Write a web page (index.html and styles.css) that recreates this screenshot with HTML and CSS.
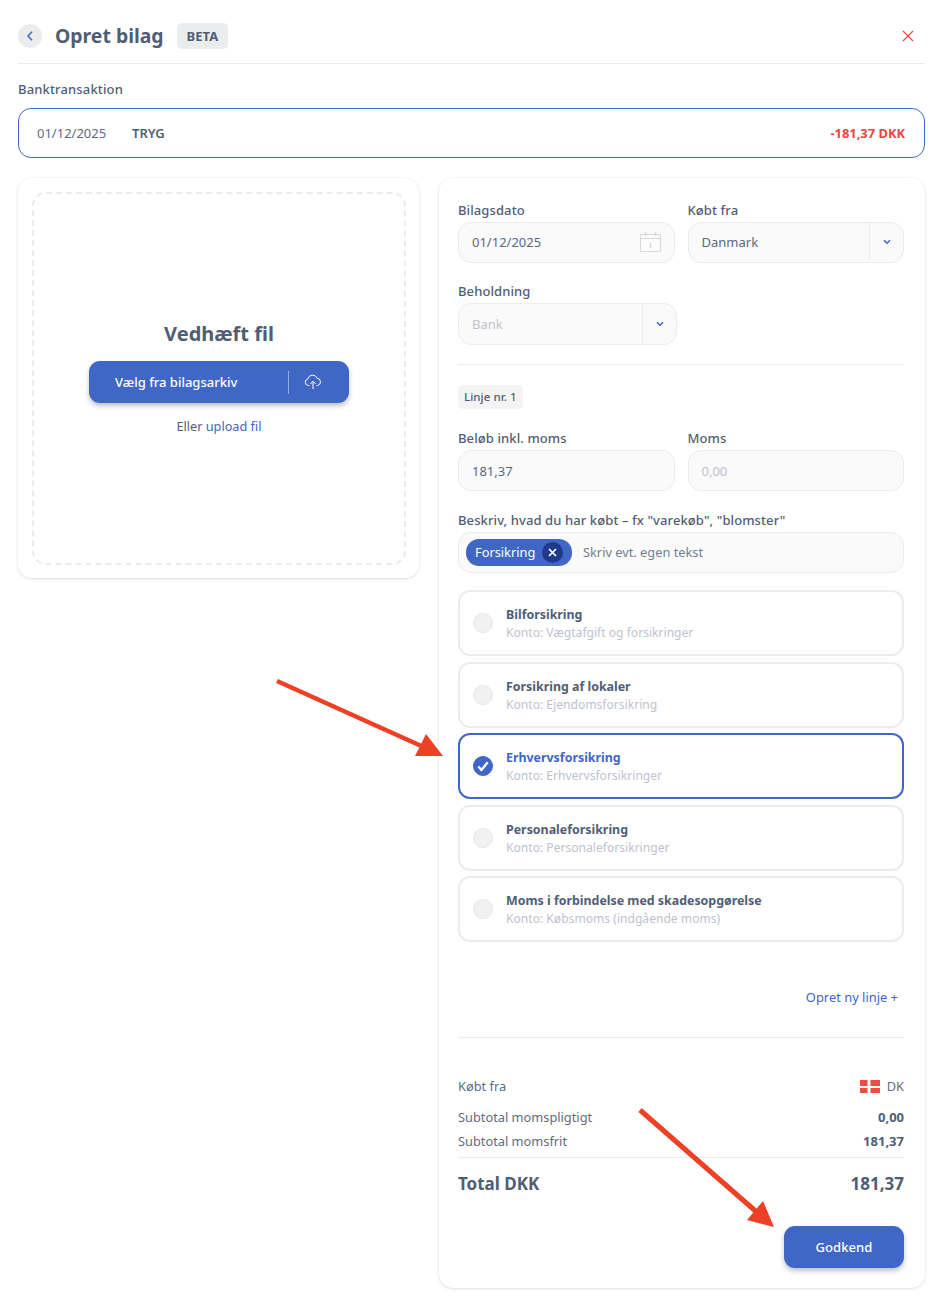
FILE: index.html
```html
<!DOCTYPE html>
<html lang="da">
<head>
<meta charset="utf-8">
<title>Opret bilag</title>
<link rel="stylesheet" href="styles.css">
</head>
<body>
<header class="top">
  <span class="back"><svg width="8" height="10" viewBox="0 0 8 10"><path d="M6 .8 2 5l4 4.2" fill="none" stroke="#3f67c6" stroke-width="1.5"/></svg></span>
  <h1>Opret bilag</h1>
  <span class="beta">BETA</span>
  <svg class="close" width="12" height="12" viewBox="0 0 12 12"><path d="M1 1l10 10M11 1 1 11" stroke="#ee4b45" stroke-width="1.3" fill="none"/></svg>
</header>
<div class="bank-label">Banktransaktion</div>
<div class="bank">
  <span class="bank-date">01/12/2025</span>
  <span class="bank-name">TRYG</span>
  <span class="bank-amount">-181,37 DKK</span>
</div>
<main class="cols">
  <section class="card left">
    <div class="drop">
      <h2>Vedhæft fil</h2>
      <div class="pick">
        <span class="pick-text">Vælg fra bilagsarkiv</span>
        <span class="pick-icon"><svg width="18" height="16" viewBox="0 0 18 16"><path d="M5.5 11.5H4.3A3.3 3.3 0 0 1 3.8 5a4.8 4.8 0 0 1 9.2-.8 3.7 3.7 0 0 1 .6 7.3h-1.1M9 15V7.5M6.3 10 9 7.3 11.7 10" fill="none" stroke="#fff" stroke-width="1"/></svg></span>
      </div>
      <p class="or">Eller <a class="link">upload fil</a></p>
    </div>
  </section>
  <section class="card right">
    <div class="row r1">
      <div class="field"><label>Bilagsdato</label>
        <div class="input">01/12/2025<svg class="cal" width="21" height="20" viewBox="0 0 21 20"><path d="M.5 2.500h20v17H.5zM.5 6.500h20" fill="#fcfcfc" stroke="#d6d8db" stroke-width="1"/><path d="M5.500 0v4M15.500 0v4M10.500 11v5" fill="none" stroke="#d6d8db" stroke-width="1.4"/></svg></div>
      </div>
      <div class="field"><label>Købt fra</label>
        <div class="input sel">Danmark<span class="caret"><svg width="8" height="6" viewBox="0 0 8 6"><path d="M1 1.2 4 4.2l3-3" fill="none" stroke="#3f67c6" stroke-width="1.6"/></svg></span></div>
      </div>
    </div>
    <div class="field hold"><label>Beholdning</label>
      <div class="input sel tall muted">Bank<span class="caret"><svg width="8" height="6" viewBox="0 0 8 6"><path d="M1 1.2 4 4.2l3-3" fill="none" stroke="#3f67c6" stroke-width="1.6"/></svg></span></div>
    </div>
    <hr class="rule r-a">
    <span class="line-no">Linje nr. 1</span>
    <div class="row r2">
      <div class="field"><label>Beløb inkl. moms</label><div class="input">181,37</div></div>
      <div class="field"><label>Moms</label><div class="input muted">0,00</div></div>
    </div>
    <div class="field desc"><label>Beskriv, hvad du har købt – fx "varekøb", "blomster"</label>
      <div class="input tagbox">
        <span class="tag">Forsikring<span class="tag-x"><svg width="9" height="9" viewBox="0 0 9 9"><path d="M1 1l7 7M8 1 1 8" stroke="#fff" stroke-width="1.7"/></svg></span></span>
        <span class="ph">Skriv evt. egen tekst</span>
      </div>
    </div>
    <div class="options">
      <div class="opt"><span class="radio"></span><div class="opt-body"><div class="opt-t">Bilforsikring</div><div class="opt-s">Konto: Vægtafgift og forsikringer</div></div></div>
      <div class="opt"><span class="radio"></span><div class="opt-body"><div class="opt-t">Forsikring af lokaler</div><div class="opt-s">Konto: Ejendomsforsikring</div></div></div>
      <div class="opt on"><span class="radio"><svg width="12" height="11" viewBox="0 0 12 11"><path d="M1.3 5.500 4.500 9 10.700 1.300" fill="none" stroke="#fff" stroke-width="2.4"/></svg></span><div class="opt-body"><div class="opt-t">Erhvervsforsikring</div><div class="opt-s">Konto: Erhvervsforsikringer</div></div></div>
      <div class="opt"><span class="radio"></span><div class="opt-body"><div class="opt-t">Personaleforsikring</div><div class="opt-s">Konto: Personaleforsikringer</div></div></div>
      <div class="opt"><span class="radio"></span><div class="opt-body"><div class="opt-t">Moms i forbindelse med skadesopgørelse</div><div class="opt-s">Konto: Købsmoms (indgående moms)</div></div></div>
    </div>
    <div class="newline"><a class="link">Opret ny linje +</a></div>
    <hr class="rule r-b">
    <div class="sum s-from"><span>Købt fra</span><span class="dk"><svg width="20" height="13" viewBox="0 0 20 13"><path d="M0 0h7.500v6H0zM10.500 0H20v6h-9.500zM0 8h7.500v5H0zM10.500 8H20v5h-9.500z" fill="#ee4b45"/></svg>DK</span></div>
    <div class="sum s-a"><span>Subtotal momspligtigt</span><b>0,00</b></div>
    <div class="sum s-b"><span>Subtotal momsfrit</span><b>181,37</b></div>
    <hr class="rule r-c">
    <div class="total"><span>Total DKK</span><span>181,37</span></div>
    <div class="actions"><span class="approve">Godkend</span></div>
  </section>
</main>
<svg class="arrow" width="944" height="1304" viewBox="0 0 944 1304">
  <path d="M277 681 428 749" stroke="#ec4125" stroke-width="4.5" fill="none"/>
  <path d="M443 756 415 756 426 734z" fill="#ec4125"/>
  <path d="M640 1110 760 1215" stroke="#ec4125" stroke-width="5" fill="none"/>
  <path d="M774 1227 747 1220 763 1201z" fill="#ec4125"/>
</svg>
</body>
</html>
```
FILE: styles.css
```css
* { box-sizing: border-box; }
html, body { margin: 0; padding: 0; }
body {
  position: relative;
  width: 944px;
  height: 1304px;
  overflow: hidden;
  padding: 0 19px 0 18px;
  background: #fff;
  color: #505e75;
  font-family: "Noto Sans", "Open Sans", sans-serif;
  font-size: 13px;
  line-height: 18px;
}
.top {
  display: flex;
  align-items: center;
  height: 64px;
  padding-top: 8px;
  border-bottom: 1px solid #e9eaec;
}
.back {
  display: flex;
  align-items: center;
  justify-content: center;
  width: 24px;
  height: 24px;
  border-radius: 50%;
  background: #ebecee;
}
h1 {
  margin: 0 13px 0 13px;
  font-size: 19.4px;
  line-height: 26px;
  font-weight: 700;
}
.beta {
  padding: 4px 10px;
  border-radius: 5px;
  background: #ebecee;
  font-size: 13px;
  font-weight: 700;
}
.close { margin-left: auto; margin-right: 11px; }
.bank-label { margin-top: 16px; font-weight: 500; letter-spacing: .15px; }
.bank {
  display: flex;
  align-items: center;
  height: 50px;
  margin-top: 10px;
  padding: 0 19px 0 18px;
  border: 1px solid #3f67c6;
  border-radius: 13px;
}
.bank-date { width: 95px; color: #5f6b7d; }
.bank-name { font-weight: 600; }
.bank-amount { margin-left: auto; color: #ee4540; font-size: 12.9px; font-weight: 700; }
.cols {
  display: flex;
  align-items: flex-start;
  gap: 20px;
  margin-top: 20px;
}
.card {
  border-radius: 14px;
  background: #fff;
  box-shadow: 0 1px 3px rgba(40, 50, 70, .14), 0 0 2px rgba(40, 50, 70, .05);
}
.left { width: 401px; height: 400px; padding: 14px 13px 13px 14px; }
.drop {
  display: flex;
  flex-direction: column;
  align-items: center;
  height: 100%;
  padding-top: 127px;
  border: 2px dashed #ebecee;
  border-radius: 14px;
}
h2 { margin: 0; font-size: 20px; line-height: 26px; font-weight: 700; }
.pick {
  display: flex;
  align-items: center;
  width: 260px;
  height: 42px;
  margin-top: 14px;
  padding-left: 26px;
  border-radius: 11px;
  background: #4067c6;
  box-shadow: 0 3px 5px rgba(40, 50, 70, .3);
  color: #fff;
  font-weight: 500;
}
.pick-text { width: 173px; }
.pick-icon {
  display: flex;
  align-items: center;
  height: 23px;
  padding-left: 15px;
  border-left: 1px solid rgba(255, 255, 255, .45);
}
.or { margin: 14px 0 0; font-size: 12.7px; }
.link { color: #4067c6; }
.right { width: 486px; height: 1110px; padding: 24px 21px 0 19px; }
.row { display: flex; gap: 13px; }
.field { display: flex; flex-direction: column; }
.row .field { flex: 1 1 0; }
label { font-weight: 500; line-height: 16px; letter-spacing: .1px; }
.input {
  position: relative;
  display: flex;
  align-items: center;
  height: 41px;
  margin-top: 4px;
  padding-left: 13px;
  border: 1px solid #ececee;
  border-radius: 13px;
  background: #fafafa;
  color: #5c687a;
}
.r1 .input { padding-bottom: 1px; }
.tall { height: 42px; }
.muted { color: #bdc3cd; }
.cal { margin-left: auto; margin-right: 13px; }
.caret {
  display: flex;
  align-items: center;
  justify-content: center;
  align-self: stretch;
  width: 34px;
  margin-left: auto;
  border-left: 1px solid #ececee;
}
.hold { width: 219px; margin-top: 20px; }
.rule { display: block; height: 1px; margin: 0; border: 0; background: #ebecee; }
.r-a { margin-top: 19px; }
.line-no {
  display: inline-block;
  margin-top: 20px;
  height: 24px;
  padding: 0 6px;
  border-radius: 5px;
  background: #f4f4f5;
  font-size: 11.5px;
  font-weight: 500;
  line-height: 24px;
  letter-spacing: .05px;
}
.r2 { margin-top: 21px; }
.desc { margin-top: 21px; }
.tagbox { padding-left: 7px; }
.tag {
  display: flex;
  align-items: center;
  justify-content: space-between;
  width: 106px;
  height: 27px;
  padding: 0 9px 1px 9px;
  border-radius: 13px;
  background: #4067c6;
  color: #fff;
  font-size: 12.8px;
}
.tag-x {
  display: flex;
  align-items: center;
  justify-content: center;
  width: 21px;
  height: 21px;
  margin-bottom: -1px;
  border-radius: 50%;
  background: #1f3a8a;
}
.ph { margin-left: 11px; padding-bottom: 1px; font-size: 12.8px; color: #737e8f; }
.options { display: flex; flex-direction: column; gap: 5px; margin-top: 17px; }
.opt {
  display: flex;
  align-items: center;
  height: 66px;
  padding-left: 13px;
  border: 2px solid #ebecee;
  border-radius: 12px;
}
.opt:nth-child(even) { margin-top: 1px; }
.radio {
  display: flex;
  align-items: center;
  justify-content: center;
  width: 20px;
  height: 20px;
  margin-right: 13px;
  border: 1px solid #e6e7e9;
  border-radius: 50%;
  background: #f1f1f2;
}
.opt-body { padding-top: 2px; }
.opt-t { font-size: 12.4px; font-weight: 700; line-height: 18px; }
.opt-s { font-size: 12.1px; line-height: 18px; color: #bdc3cd; }
.on { border-color: #4067c6; }
.on .radio { background: #4067c6; border-color: #4067c6; }
.on .opt-t { color: #4067c6; }
.newline { margin-top: 46px; padding-right: 6px; font-size: 12.9px; text-align: right; }
.r-b { margin-top: 31px; }
.sum { display: flex; justify-content: space-between; align-items: center; color: #5f6b7d; font-size: 12.8px; }
.sum b { color: #505e75; font-size: 13px; font-weight: 700; }
.s-from { margin-top: 39px; }
.dk { display: flex; align-items: center; gap: 7px; }
.s-a { margin-top: 13px; }
.s-b { margin-top: 6px; }
.r-c { margin-top: 7px; }
.total {
  display: flex;
  justify-content: space-between;
  margin-top: 13px;
  font-size: 17px;
  line-height: 26px;
  font-weight: 700;
}
.actions { display: flex; justify-content: flex-end; margin-top: 29px; }
.approve {
  display: flex;
  align-items: center;
  justify-content: center;
  width: 120px;
  height: 42px;
  border-radius: 11px;
  background: #4067c6;
  box-shadow: 0 3px 5px rgba(40, 50, 70, .3);
  color: #fff;
  font-weight: 500;
  letter-spacing: .1px;
}
.arrow { position: absolute; left: 0; top: 0; pointer-events: none; }
```
